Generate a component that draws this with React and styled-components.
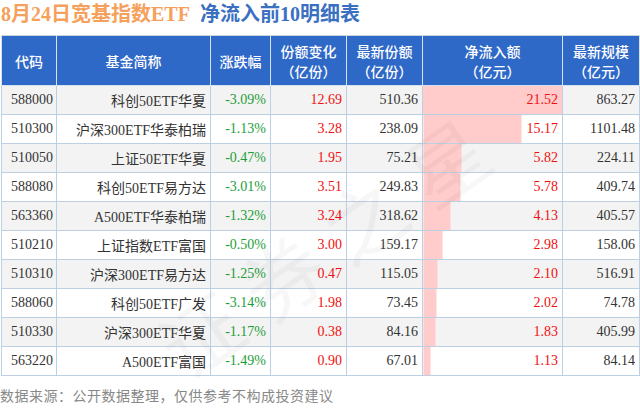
import styled, { createGlobalStyle } from "styled-components";

const GlobalStyle = createGlobalStyle`
    body {
        margin: 0;
        background: #ffffff;
        font-family: "Liberation Serif", "Noto Sans CJK SC", serif;
    }
`;

/* Whole picture */
const Page = styled.div`
    position: relative;
    width: 640px;
    height: 410px;
    overflow: hidden;
    background: #ffffff;
`;

/* Heading line with date part and subject part */
const Heading = styled.h1`
    margin: 0;
    padding: 2px 0 0 1px;
    height: 35px;
    box-sizing: border-box;
    font-size: 20px;
    font-weight: bold;
    line-height: 24px;
    white-space: nowrap;
`;

const HeadPart = styled.span`
    color: ${(p) => p.$color};
    margin-right: ${(p) => p.$gap || 0}px;
`;

const Table = styled.table`
    margin-left: 1px;
    width: 638px;
    border-collapse: collapse;
    table-layout: fixed;
    border: 1px solid #c9d3dd;
`;

const HeadCell = styled.th`
    height: 49px;
    padding: 0;
    background: #2f69c8;
    color: #ffffff;
    font-family: "Noto Sans CJK SC", sans-serif;
    font-size: 14px;
    font-weight: 500;
    line-height: 20px;
    text-align: center;
    border: 1px solid #d7e2ef;
    border-top: none;
`;

const Row = styled.tr`
    background: ${(p) => (p.$odd ? "#f3f3f3" : "#ffffff")};
`;

const Cell = styled.td`
    height: 28px;
    padding: ${(p) => (p.$left ? "0 0 0 9px" : "0 4px 0 0")};
    text-align: ${(p) => (p.$left ? "left" : "right")};
    font-size: 14px;
    color: ${(p) => p.$color || "#333333"};
    border: 1px solid #bdd0e3;
    white-space: nowrap;
    overflow: hidden;
`;

/* Net inflow cell: pink bar proportional to the value */
const FlowCell = styled(Cell)`
    background: linear-gradient(
        to right,
        #ffcbcb ${(p) => p.$pct}%,
        transparent ${(p) => p.$pct}%
    );
`;

const Source = styled.div`
    padding: 9px 0 0 0;
    font-family: "Noto Sans CJK SC", sans-serif;
    font-size: 14px;
    letter-spacing: 0.5px;
    color: #888888;
`;

/* Faint diagonal watermark over the table */
const Watermark = styled.div`
    position: absolute;
    left: 130px;
    top: 185px;
    width: 400px;
    transform: rotate(-35deg);
    font-family: "Noto Sans CJK SC", sans-serif;
    font-size: 80px;
    line-height: 110px;
    letter-spacing: 20px;
    text-align: center;
    color: rgba(0, 0, 0, 0.03);
    white-space: nowrap;
    pointer-events: none;
`;

const rows = [
    ["588000", "科创50ETF华夏", "-3.09%", "12.69", "510.36", "21.52", "863.27"],
    ["510300", "沪深300ETF华泰柏瑞", "-1.13%", "3.28", "238.09", "15.17", "1101.48"],
    ["510050", "上证50ETF华夏", "-0.47%", "1.95", "75.21", "5.82", "224.11"],
    ["588080", "科创50ETF易方达", "-3.01%", "3.51", "249.83", "5.78", "409.74"],
    ["563360", "A500ETF华泰柏瑞", "-1.32%", "3.24", "318.62", "4.13", "405.57"],
    ["510210", "上证指数ETF富国", "-0.50%", "3.00", "159.17", "2.98", "158.06"],
    ["510310", "沪深300ETF易方达", "-1.25%", "0.47", "115.05", "2.10", "516.91"],
    ["588060", "科创50ETF广发", "-3.14%", "1.98", "73.45", "2.02", "74.78"],
    ["510330", "沪深300ETF华夏", "-1.17%", "0.38", "84.16", "1.83", "405.99"],
    ["563220", "A500ETF富国", "-1.49%", "0.90", "67.01", "1.13", "84.14"],
];

const widths = [55, 154, 60, 76, 76, 140, 77];

const maxFlow = 21.52;

const App = () => {
    return (
        <Page>
            <GlobalStyle />
            <Heading>
                <HeadPart $color="#f5a15c" $gap={10}>8月24日宽基指数ETF</HeadPart>
                <HeadPart $color="#3b6fc2">净流入前10明细表</HeadPart>
            </Heading>
            <Table>
                <colgroup>
                    {widths.map((w, i) => (
                        <col key={i} style={{ width: w }} />
                    ))}
                </colgroup>
                <thead>
                    <tr>
                        <HeadCell>代码</HeadCell>
                        <HeadCell>基金简称</HeadCell>
                        <HeadCell>涨跌幅</HeadCell>
                        <HeadCell>份额变化<br />（亿份）</HeadCell>
                        <HeadCell>最新份额<br />（亿份）</HeadCell>
                        <HeadCell>净流入额<br />（亿元）</HeadCell>
                        <HeadCell>最新规模<br />（亿元）</HeadCell>
                    </tr>
                </thead>
                <tbody>
                    {rows.map((r, i) => (
                        <Row key={r[0]} $odd={i % 2 === 0}>
                            <Cell $left>{r[0]}</Cell>
                            <Cell>{r[1]}</Cell>
                            <Cell $color="#1e9e3a">{r[2]}</Cell>
                            <Cell $color="#f01010">{r[3]}</Cell>
                            <Cell>{r[4]}</Cell>
                            <FlowCell $color="#f01010" $pct={(parseFloat(r[5]) / maxFlow) * 100}>
                                {r[5]}
                            </FlowCell>
                            <Cell>{r[6]}</Cell>
                        </Row>
                    ))}
                </tbody>
            </Table>
            <Source>数据来源：公开数据整理，仅供参考不构成投资建议</Source>
            <Watermark>证券之星</Watermark>
        </Page>
    );
};

export default App;
